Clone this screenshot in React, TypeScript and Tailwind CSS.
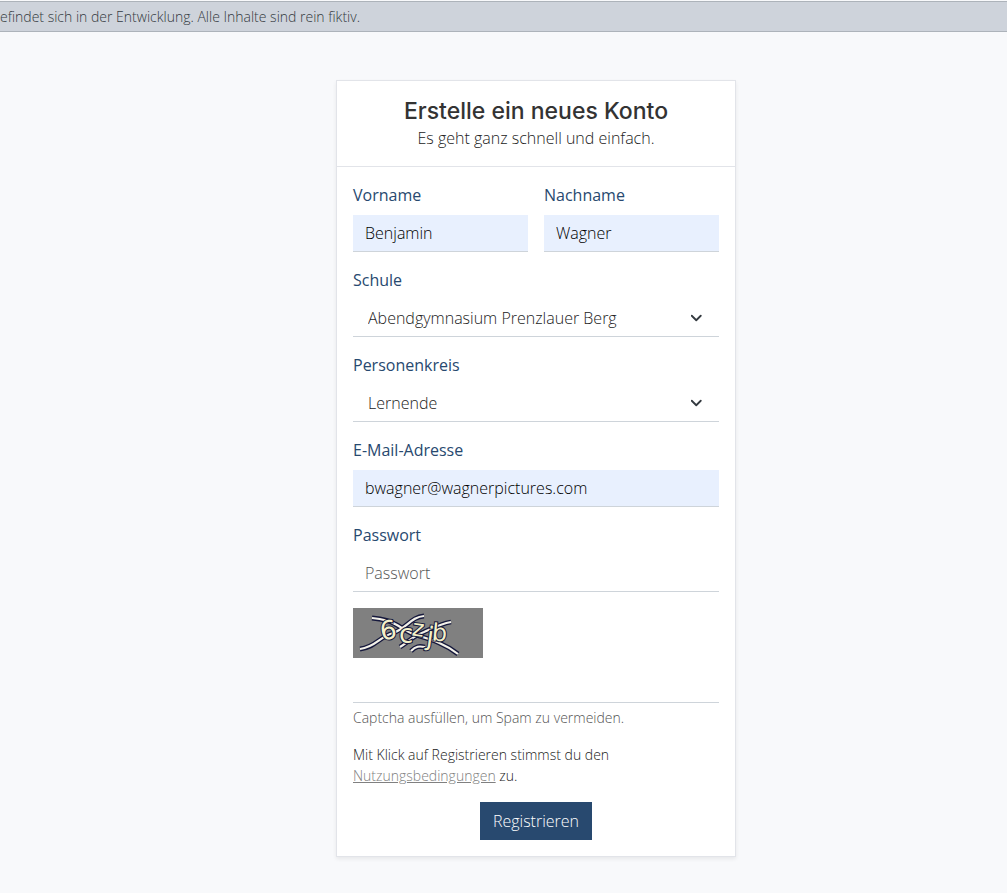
import { ReactNode } from "react";

const control =
  "block h-[37px] w-full border-b border-[#ced4da] text-base font-light outline-none";
const filled = `${control} bg-[#e8f0fe] px-3 text-black`;
const empty = `${control} bg-transparent px-3 text-[#222222] placeholder:text-[#555555]`;

function Field({ id, label, children }: { id: string; label: string; children: ReactNode }) {
  return (
    <div className="min-w-0">
      <label htmlFor={id} className="mb-2 block text-base leading-6 text-[#28496f]">
        {label}
      </label>
      {children}
    </div>
  );
}

function Select({ id, options }: { id: string; options: string[] }) {
  return (
    <div className="relative">
      <select
        id={id}
        className="block h-[37px] w-full appearance-none border-b border-[#ced4da] bg-transparent pr-9 pl-[15px] text-base font-light text-[#222222] outline-none"
      >
        {options.map((option) => (
          <option key={option}>{option}</option>
        ))}
      </select>
      <svg
        className="pointer-events-none absolute top-3 right-4 h-3 w-3"
        viewBox="0 0 16 16"
        fill="none"
        stroke="#343a40"
        strokeWidth="2.4"
        strokeLinecap="round"
        strokeLinejoin="round"
        aria-hidden="true"
      >
        <path d="M1 5l6 6 6-6" />
      </svg>
    </div>
  );
}

const scribbles = [
  "M19 10 C28 11 36 12 42 16 C50 20 56 26 66 28 C80 32 92 36 105 46",
  "M7 41 C23 39 26 29 40 25 C54 20 58 9 71 8",
  "M47 39 C55 34 60 28 71 24 C80 20 87 16 98 14",
  "M58 43 C63 38 66 38 72 39",
];

function Captcha() {
  return (
    <svg className="block h-[50px] w-[130px]" viewBox="0 0 130 50" role="img" aria-label="Captcha">
      <rect width="130" height="50" fill="#808080" />
      <g fill="none" stroke="#15183c" strokeWidth="4.8">
        {scribbles.map((d) => (
          <path key={d} d={d} />
        ))}
      </g>
      <g fill="none" stroke="#f4f2ea" strokeWidth="2.2">
        {scribbles.map((d) => (
          <path key={d} d={d} />
        ))}
      </g>
      <g
        fill="#f4f0c8"
        stroke="#15183c"
        strokeWidth="2"
        paintOrder="stroke"
        fontFamily="DejaVu Sans, sans-serif"
      >
        <text x="27" y="31" fontSize="26" transform="rotate(-8 36 22)">6</text>
        <text x="46" y="35" fontSize="26">c</text>
        <text x="59" y="28" fontSize="23" transform="rotate(8 64 22)">z</text>
        <text x="73" y="37" fontSize="26" transform="rotate(8 75 34)">j</text>
        <text x="79" y="33" fontSize="24" transform="rotate(5 86 25)">b</text>
      </g>
    </svg>
  );
}

export default function App() {
  return (
    <div className="min-h-screen bg-[#f8f9fb] font-['Open_Sans',sans-serif] text-[#222222]">
      <div className="pt-px">
        <div className="border-y border-[#adb3ba] bg-[#ced3db]">
          <p className="text-sm leading-[29px] font-light text-[#343a40]">
            efindet sich in der Entwicklung. Alle Inhalte sind rein fiktiv.
          </p>
        </div>
      </div>
      <main className="pt-12 pb-9 pl-[65px]">
        <section className="mx-auto w-full max-w-[400px] border border-[#e2e4e9] bg-white shadow-[0_2px_4px_rgba(0,0,0,0.07)]">
          <header className="border-b border-[#e2e4e9] p-4 text-center">
            <h1 className="font-['Inter',sans-serif] text-[23px] leading-[29px] font-medium text-[#333333]">
              Erstelle ein neues Konto
            </h1>
            <p className="text-base leading-6 font-light">Es geht ganz schnell und einfach.</p>
          </header>
          <form className="flex flex-col gap-4 p-4" onSubmit={(e) => e.preventDefault()}>
            <div className="grid grid-cols-2 gap-4">
              <Field id="vorname" label="Vorname">
                <input id="vorname" className={filled} defaultValue="Benjamin" />
              </Field>
              <Field id="nachname" label="Nachname">
                <input id="nachname" className={filled} defaultValue="Wagner" />
              </Field>
            </div>
            <Field id="schule" label="Schule">
              <Select id="schule" options={["Abendgymnasium Prenzlauer Berg"]} />
            </Field>
            <Field id="personenkreis" label="Personenkreis">
              <Select id="personenkreis" options={["Lernende"]} />
            </Field>
            <Field id="email" label="E-Mail-Adresse">
              <input id="email" type="email" className={filled} defaultValue="bwagner@wagnerpictures.com" />
            </Field>
            <Field id="passwort" label="Passwort">
              <input id="passwort" type="password" className={empty} placeholder="Passwort" />
            </Field>
            <div>
              <Captcha />
              <input id="captcha" className={`${empty} mt-2`} />
              <label htmlFor="captcha" className="mt-1 block text-sm leading-[21px] font-light text-[#555555]">
                Captcha ausfüllen, um Spam zu vermeiden.
              </label>
            </div>
            <p className="max-w-[300px] text-sm leading-[21px] font-light">
              Mit Klick auf Registrieren stimmst du den{" "}
              <a href="#nutzungsbedingungen" className="text-[#808080] underline">
                Nutzungsbedingungen
              </a>{" "}
              zu.
            </p>
            <button type="submit" className="h-[38px] self-center bg-[#28496f] px-[13px] text-base font-light text-white">
              Registrieren
            </button>
          </form>
        </section>
      </main>
    </div>
  );
}
